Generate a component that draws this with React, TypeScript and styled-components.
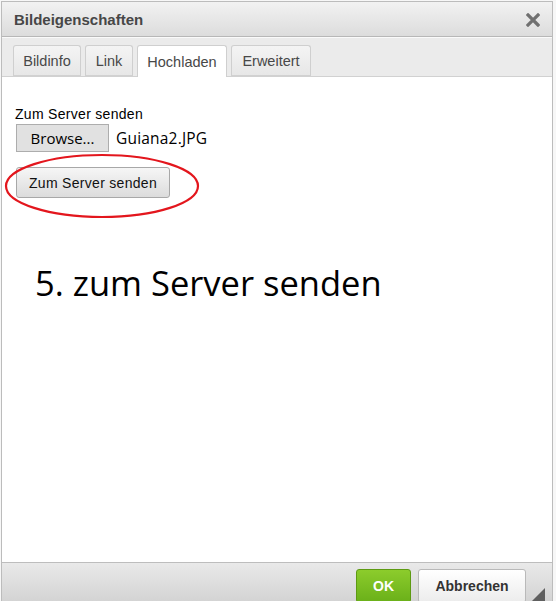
import React from "react";
import styled, { createGlobalStyle } from "styled-components";

const Global = createGlobalStyle`
  html, body { margin: 0; padding: 0; background: #f7f7f7; }
  body { width: 556px; height: 601px; overflow: hidden; font-family: "Liberation Sans", Arial, sans-serif; }
`;

const Dialog = styled.div`
  margin: 1px 0 0 1px;
  width: 550px;
  height: 600px;
  border: 1px solid #bcbcbc;
  border-bottom: none;
  display: flex;
  flex-direction: column;
  background: #fff;
  box-sizing: content-box;
`;

const TitleBar = styled.div`
  height: 34px;
  flex: none;
  display: flex;
  align-items: center;
  justify-content: space-between;
  padding: 0 12px 0 12px;
  background: linear-gradient(#f2f2f2, #dcdcdc);
  border-bottom: 1px solid #b7b7b7;
`;

const Title = styled.div`
  font-weight: bold;
  font-size: 15px;
  color: #474747;
`;

const Close = styled.div`
  width: 14px;
  height: 14px;
  display: flex;
  margin-top: 1px;
`;

const TabBar = styled.div`
  flex: none;
  height: 40px;
  background: #ebebeb;
  border-top: 1px solid #fafafa;
  border-bottom: 1px solid #d1d1d1;
  display: flex;
  align-items: flex-end;
  gap: 4px;
  padding: 0 0 0 11px;
  box-sizing: border-box;
`;

const Tab = styled.div<{ $active?: boolean; $w: number }>`
  width: ${(p) => p.$w}px;
  height: ${(p) => (p.$active ? 32 : 31)}px;
  margin-bottom: ${(p) => (p.$active ? -1 : 0)}px;
  box-sizing: border-box;
  border: 1px solid #cfcfcf;
  border-bottom: ${(p) => (p.$active ? "none" : "1px solid #d1d1d1")};
  border-radius: 3px 3px 0 0;
  background: ${(p) => (p.$active ? "#fff" : "linear-gradient(#f4f4f4, #e7e7e7)")};
  color: #484848;
  font-size: 14.5px;
  display: flex;
  align-items: center;
  justify-content: center;
  padding-top: 1px;
`;

const Content = styled.div`
  flex: 1;
  position: relative;
  padding: 30px 0 0 13px;
  background: #fff;
`;

const Label = styled.div`
  font-size: 14px;
  letter-spacing: 0.3px;
  color: #000;
  line-height: 15px;
`;

const FileRow = styled.div`
  display: flex;
  align-items: center;
  gap: 7px;
  margin-top: 2px;
  margin-left: 1px;
`;

const BrowseButton = styled.div`
  width: 93px;
  height: 28px;
  box-sizing: border-box;
  background: #e1e1e1;
  border: 1px solid #adadad;
  font-family: "Open Sans", sans-serif;
  font-size: 15px;
  color: #000;
  display: flex;
  align-items: center;
  justify-content: center;
`;

const FileName = styled.div`
  font-family: "Open Sans", sans-serif;
  font-size: 15.5px;
  letter-spacing: 0.2px;
  color: #000;
`;

const SendWrap = styled.div`
  position: relative;
  margin-top: 15px;
  margin-left: 1px;
  width: 154px;
`;

const SendButton = styled.div`
  width: 154px;
  height: 31px;
  box-sizing: border-box;
  border: 1px solid #a8a8a8;
  border-radius: 3px;
  background: linear-gradient(#f6f6f6, #dcdcdc);
  font-size: 14px;
  letter-spacing: 0.3px;
  color: #111;
  display: flex;
  align-items: center;
  justify-content: center;
`;

const Ellipse = styled.svg`
  position: absolute;
  left: -14px;
  top: -14px;
  pointer-events: none;
`;

const BigNote = styled.div`
  font-family: "Open Sans", sans-serif;
  font-size: 34.5px;
  color: #000;
  margin-top: 65px;
  margin-left: 20px;
  line-height: 40px;
`;

const Footer = styled.div`
  flex: none;
  height: 40px;
  border-top: 1px solid #bdbdbd;
  background: linear-gradient(#e9e9e9, #d3d3d3);
  display: flex;
  align-items: flex-start;
  justify-content: flex-end;
  gap: 7px;
  padding: 6px 26px 0 0;
  box-sizing: border-box;
  position: relative;
`;

const OkButton = styled.div`
  width: 55px;
  height: 34px;
  box-sizing: border-box;
  border: 1px solid #5d9a12;
  border-radius: 3px;
  background: linear-gradient(#8ccc2c, #6ab019);
  color: #fff;
  font-weight: bold;
  font-size: 14px;
  display: flex;
  align-items: center;
  justify-content: center;
`;

const CancelButton = styled.div`
  width: 108px;
  height: 34px;
  box-sizing: border-box;
  border: 1px solid #b9b9b9;
  border-radius: 3px;
  background: linear-gradient(#ffffff, #ececec);
  color: #333;
  font-weight: bold;
  font-size: 14px;
  display: flex;
  align-items: center;
  justify-content: center;
`;

const Grip = styled.svg`
  position: absolute;
  right: 7px;
  bottom: 1px;
`;

export default function App() {
  return (
    <>
      <Global />
      <Dialog>
        <TitleBar>
          <Title>Bildeigenschaften</Title>
          <Close>
            <svg width="14" height="14" viewBox="0 0 14 14">
              <path d="M2 2 L12 12 M12 2 L2 12" stroke="#707070" strokeWidth="3.2" strokeLinecap="square" />
            </svg>
          </Close>
        </TitleBar>
        <TabBar>
          <Tab $w={68}>Bildinfo</Tab>
          <Tab $w={48}>Link</Tab>
          <Tab $active $w={90}>Hochladen</Tab>
          <Tab $w={80}>Erweitert</Tab>
        </TabBar>
        <Content>
          <Label>Zum Server senden</Label>
          <FileRow>
            <BrowseButton>Browse...</BrowseButton>
            <FileName>Guiana2.JPG</FileName>
          </FileRow>
          <SendWrap>
            <SendButton>Zum Server senden</SendButton>
            <Ellipse width="204" height="68" viewBox="0 0 204 68">
              <ellipse cx="100" cy="33" rx="96" ry="31" fill="none" stroke="#e3161d" strokeWidth="2.2" />
            </Ellipse>
          </SendWrap>
          <BigNote>5. zum Server senden</BigNote>
        </Content>
        <Footer>
          <OkButton>OK</OkButton>
          <CancelButton>Abbrechen</CancelButton>
          <Grip width="13" height="13" viewBox="0 0 13 13">
            <path d="M13 0 L13 13 L0 13 Z" fill="#5f5f5f" />
          </Grip>
        </Footer>
      </Dialog>
    </>
  );
}
